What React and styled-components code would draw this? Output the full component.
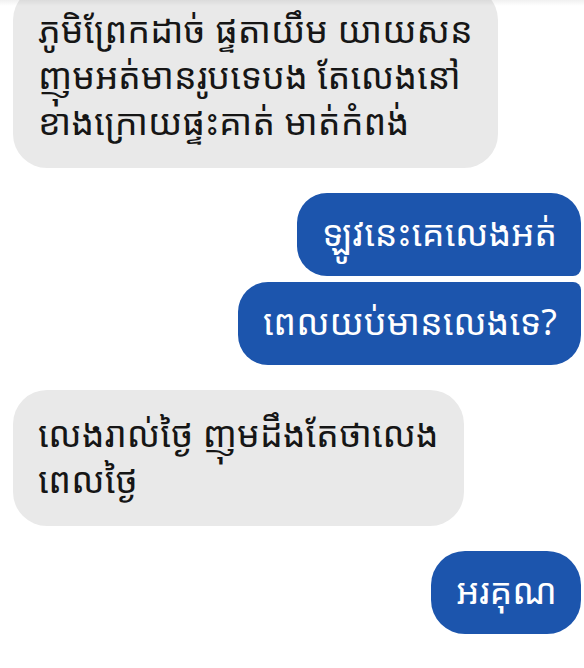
import React from 'react';
import styled, { createGlobalStyle } from 'styled-components';

const GlobalStyle = createGlobalStyle`
  html, body {
    margin: 0;
    padding: 0;
    background: #fff;
  }
  body {
    font-family: "Noto Sans Khmer", "Khmer OS", "Noto Sans", "DejaVu Sans", sans-serif;
    overflow: hidden;
  }
`;

const messages = [
  { id: 1, mine: false, lines: ['ភូមិព្រែកដាច់ ផ្ទតាយឹម យាយសន', 'ញុមអត់មានរូបទេបង តែលេងនៅ', 'ខាងក្រោយផ្ទះគាត់ មាត់កំពង់'] },
  { id: 2, mine: true, pos: 'first', lines: ['ឡូវនេះគេលេងអត់'] },
  { id: 3, mine: true, pos: 'last', lines: ['ពេលយប់មានលេងទេ?'] },
  { id: 4, mine: false, lines: ['លេងរាល់ថ្ងៃ ញុមដឹងតែថាលេង', 'ពេលថ្ងៃ'] },
  { id: 5, mine: true, lines: ['អរគុណ'] },
];

function radius(mine, pos) {
  if (!mine || !pos) return '34px';
  if (pos === 'first') return '30px 30px 8px 30px';
  return '30px 8px 30px 30px';
}

function gapBefore(index, pos) {
  if (index === 0) return '-14px';
  if (pos === 'last') return '6px';
  return '25px';
}

export default function App() {
  return (
    <>
      <GlobalStyle />
      <Thread>
        <TopShade />
        {messages.map((m, i) => (
          <Row key={m.id} $mine={m.mine} $gap={gapBefore(i, m.pos)}>
            <Bubble $mine={m.mine} $radius={radius(m.mine, m.pos)}>
              {m.lines.map((l, j) => (
                <Line key={j}>{l}</Line>
              ))}
            </Bubble>
          </Row>
        ))}
      </Thread>
    </>
  );
}

const Thread = styled.div`
  width: 584px;
  height: 668px;
  box-sizing: border-box;
  padding: 0 3px 0 13px;
  display: flex;
  flex-direction: column;
  position: relative;
  overflow: hidden;
`;

const TopShade = styled.div`
  position: absolute;
  top: 0;
  left: 0;
  right: 0;
  height: 6px;
  background: linear-gradient(rgba(0, 0, 0, 0.06), rgba(0, 0, 0, 0));
  z-index: 2;
`;

const Row = styled.div`
  display: flex;
  flex-shrink: 0;
  justify-content: ${(p) => (p.$mine ? 'flex-end' : 'flex-start')};
  margin-top: ${(p) => p.$gap};
`;

const Bubble = styled.div`
  background: ${(p) => (p.$mine ? '#1c55ad' : '#e9e9e9')};
  color: ${(p) => (p.$mine ? '#ffffff' : '#161616')};
  border-radius: ${(p) => p.$radius};
  padding: ${(p) => (p.$mine ? '17px 24px 20px 25px' : '21px 25px 23px 25px')};
  font-size: 36px;
  line-height: 46px;
  white-space: nowrap;
`;

const Line = styled.div``;
